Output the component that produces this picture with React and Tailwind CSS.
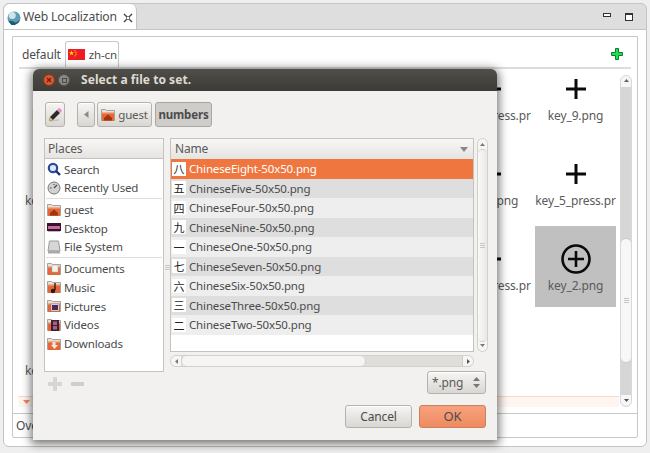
const font = { fontFamily: '"Noto Sans", sans-serif', letterSpacing: "-0.15px" };

const Plus = () => (
  <svg width="30" height="30" viewBox="0 0 30 30" className="block">
    <path d="M15 5v20M5 15h20" stroke="#0a0a0a" strokeWidth="3" fill="none" />
  </svg>
);

const CirclePlus = () => (
  <svg width="30" height="30" viewBox="0 0 30 30" className="block">
    <circle cx="15" cy="15" r="13.5" stroke="#0a0a0a" strokeWidth="2.6" fill="none" />
    <path d="M15 7v16M7 15h16" stroke="#0a0a0a" strokeWidth="2.6" fill="none" />
  </svg>
);

const Tile = ({ label, selected, icon }) => (
  <div className={`w-[81px] h-[81px] flex flex-col items-center pt-[18px] overflow-hidden ${selected ? "bg-[#c0c0c0]" : ""}`}>
    {icon || <Plus />}
    <div className="mt-[3px] w-[81px] text-center whitespace-nowrap overflow-hidden text-[12px] leading-[18px] text-[#5a5a5a]">{label}</div>
  </div>
);

// covered by the dialog, nothing of it can be seen
const Hidden = () => <div className="w-[81px] h-[81px]" />;

// first column, only the start of the label sticks out left of the dialog
const Stub = ({ label, indent }) => (
  <div className={`w-[81px] h-[81px] pt-[51px] text-[12px] leading-[18px] text-[#5a5a5a] whitespace-nowrap ${indent ? "pl-[7px]" : ""}`}>{label}</div>
);

const Globe = () => (
  <svg width="14" height="14" viewBox="0 0 16 16">
    <circle cx="8" cy="8" r="7.5" fill="#5f9db3" />
    <circle cx="6" cy="5" r="4" fill="#cfe3ea" />
    <path d="M2 12c2-2 5 0 7 1s3-1 5-3l-1 3-4 3H5z" fill="#1f5a73" />
  </svg>
);

const Flag = () => (
  <svg width="17" height="11" viewBox="0 0 17 11" className="shrink-0">
    <rect width="17" height="11" fill="#ee1c25" />
    <path d="M3.500 1.500l.7 1.800 1.800.1-1.400 1.100.5 1.800-1.600-1-1.600 1 .5-1.800L1 3.400l1.800-.1z" fill="#ffde00" />
    <circle cx="7" cy="1.800" r=".6" fill="#ffde00" />
    <circle cx="8" cy="3.400" r=".6" fill="#ffde00" />
    <circle cx="8" cy="5.200" r=".6" fill="#ffde00" />
    <circle cx="7" cy="6.800" r=".6" fill="#ffde00" />
  </svg>
);

// small orange ubuntu style folder, the glyph in the middle changes
const Folder = ({ children }) => (
  <svg width="14" height="14" viewBox="0 0 14 14" className="block shrink-0">
    <path d="M.5 1.500h4l1 1h8v10H.5z" fill="#e4e1dc" stroke="#a5a19b" />
    <rect x="1" y="4" width="12" height="9" fill="#e2683c" />
    <path d="M1 4h12v1.500H1z" fill="#f2ad8c" />
    {children}
  </svg>
);

const HomeFolder = () => (
  <Folder>
    <path d="M3 10l4-3.500L11 10v2.500H3z" fill="#a33310" />
  </Folder>
);

const PlaceIcon = ({ name }) => {
  if (name === "search") {
    return (
      <svg width="14" height="14" viewBox="0 0 14 14" className="block shrink-0">
        <circle cx="6" cy="6" r="4.200" fill="#dfe7f5" stroke="#2c4a9a" strokeWidth="2.200" />
        <path d="M9 9l4 4" stroke="#1d2f66" strokeWidth="2.400" />
      </svg>
    );
  }
  if (name === "recent") {
    return (
      <svg width="14" height="14" viewBox="0 0 14 14" className="block shrink-0">
        <circle cx="7" cy="7" r="6" fill="#d2d2d2" stroke="#777" />
        <path d="M7 7l3-3M3 7h1.500M7 3v1" stroke="#444" strokeWidth="1.200" />
      </svg>
    );
  }
  if (name === "desktop") {
    return (
      <svg width="14" height="14" viewBox="0 0 14 14" className="block shrink-0">
        <rect x="0" y="2" width="14" height="8" fill="#3a1230" />
        <rect x="1" y="5" width="12" height="3" fill="#c86a9a" />
        <rect x="1" y="10" width="12" height="1" fill="#bbb" />
      </svg>
    );
  }
  if (name === "fs") {
    return (
      <svg width="14" height="14" viewBox="0 0 14 14" className="block shrink-0">
        <path d="M2.500 1h9l1.500 10h-12z" fill="#d6d6d6" stroke="#9b9b9b" />
        <rect x="1" y="10.500" width="12" height="3" fill="#a9a9a9" />
      </svg>
    );
  }
  if (name === "guest") return <HomeFolder />;
  if (name === "docs") {
    return (
      <Folder>
        <rect x="5" y="3" width="6" height="7" fill="#f4f0ea" stroke="#aaa" strokeWidth=".5" />
      </Folder>
    );
  }
  if (name === "music") {
    return (
      <Folder>
        <path d="M8 3v7" stroke="#2a1a12" strokeWidth="1.400" />
        <circle cx="6" cy="11" r="2.200" fill="#2a1a12" />
      </Folder>
    );
  }
  if (name === "pictures") {
    return (
      <Folder>
        <rect x="4" y="5" width="8" height="7" fill="#eee" stroke="#777" strokeWidth=".5" />
        <rect x="5" y="6" width="6" height="5" fill="#4a2a5c" />
      </Folder>
    );
  }
  if (name === "videos") {
    return (
      <Folder>
        <rect x="4" y="2" width="8" height="11" fill="#3b2032" />
        <rect x="6" y="3.500" width="4" height="3.500" fill="#a8608c" />
        <rect x="6" y="8" width="4" height="3.500" fill="#a8608c" />
      </Folder>
    );
  }
  return (
    <Folder>
      <path d="M5.500 5h3v3H11l-3.500 4L4 8h1.500z" fill="#f2e6da" />
    </Folder>
  );
};

const Place = ({ icon, label }) => (
  <div className="h-[18.7px] flex items-center gap-[3px] pl-[1px] text-[11.5px] text-[#4c4c4c] whitespace-nowrap">
    <PlaceIcon name={icon} />
    <span>{label}</span>
  </div>
);

const files = [
  ["八", "ChineseEight-50x50.png"],
  ["五", "ChineseFive-50x50.png"],
  ["四", "ChineseFour-50x50.png"],
  ["九", "ChineseNine-50x50.png"],
  ["一", "ChineseOne-50x50.png"],
  ["七", "ChineseSeven-50x50.png"],
  ["六", "ChineseSix-50x50.png"],
  ["三", "ChineseThree-50x50.png"],
  ["二", "ChineseTwo-50x50.png"],
];

const FileRow = ({ glyph, name, index }) => {
  const bg = index === 0 ? "bg-[#f0763f] text-white" : index % 2 === 1 ? "bg-[#dedede] text-[#4c4c4c]" : "bg-[#eeeeee] text-[#4c4c4c]";
  return (
    <div className={`h-[19.5px] flex items-center pl-[1px] gap-[3px] text-[11.5px] whitespace-nowrap ${bg}`}>
      <span
        className="w-[14px] h-[14px] bg-white text-[#222] text-[11px] leading-[14px] text-center shrink-0"
        style={{ fontFamily: '"Noto Sans CJK SC", sans-serif' }}
      >
        {glyph}
      </span>
      <span>{name}</span>
    </div>
  );
};

const Grip = () => (
  <div className="flex flex-col gap-px">
    <div className="w-[5px] h-px bg-[#c8c6c2]" />
    <div className="w-[5px] h-px bg-[#c8c6c2]" />
    <div className="w-[5px] h-px bg-[#c8c6c2]" />
  </div>
);

const btn = "rounded-[3px] border border-[#b5b2ac] bg-gradient-to-b from-[#f6f5f3] to-[#d9d7d3] shadow-[inset_0_1px_0_#fff]";

const Dialog = () => (
  <div className="absolute left-[33px] top-[69px] w-[464px] h-[371px] rounded-t-[6px] bg-[#f2f1f0] shadow-[0_2px_10px_2px_rgba(0,0,0,0.55)] flex flex-col overflow-hidden">
    <div className="h-[22px] shrink-0 bg-gradient-to-b from-[#4f4e48] to-[#3c3b37] flex items-center pl-[10px]">
      <span className="w-[12px] h-[12px] rounded-full bg-[#e0562c] border border-[#7a3a20] flex items-center justify-center">
        <svg width="6" height="6" viewBox="0 0 6 6"><path d="M1 1l4 4M5 1L1 5" stroke="#5a2412" strokeWidth="1.200" /></svg>
      </span>
      <span className="ml-[3px] w-[12px] h-[12px] rounded-full bg-[#8b8982] border border-[#55544e] flex items-center justify-center">
        <span className="block w-[5px] h-[5px] border border-[#4a4943]" />
      </span>
      <span className="ml-[11px] text-[12px] font-bold tracking-[0.05px] text-[#dfdbd2] whitespace-nowrap">Select a file to set.</span>
    </div>

    <div className="flex items-stretch h-[25px] mt-[11px] ml-[12px] shrink-0">
      <div className={`w-[20px] flex items-center justify-center ${btn}`}>
        <svg width="16" height="16" viewBox="0 0 16 16">
          <path d="M3 14l9-1" stroke="#c4c2be" strokeWidth="1.400" />
          <path d="M2 14l1-4 7-7 3 3-7 7z" fill="#2b2b2b" />
          <path d="M2 14l1-4 3 3z" fill="#d9c56a" />
          <path d="M10 3l1.500-1.500a1 1 0 0 1 1.500 0L14.500 3a1 1 0 0 1 0 1.500L13 6z" fill="#e48fc4" />
        </svg>
      </div>
      <div className={`w-[18px] ml-[12px] flex items-center justify-center ${btn}`}>
        <svg width="5" height="7" viewBox="0 0 5 7"><path d="M4.500 0v7L0 3.500z" fill="#8a8a8a" /></svg>
      </div>
      <div className={`w-[55px] ml-[2px] flex items-center justify-center gap-[3px] text-[11.5px] text-[#5a5a5a] ${btn}`}>
        <HomeFolder />
        <span>guest</span>
      </div>
      <div className="w-[57px] ml-[3px] flex items-center justify-center rounded-[3px] border border-[#a9a7a2] bg-[#cfcdc9] text-[11.5px] font-bold text-[#4c4c4c]">numbers</div>
    </div>

    <div className="flex mt-[11px] ml-[11px] h-[234px] shrink-0">
      <div className="w-[120px] flex flex-col">
        <div className="h-[21px] flex items-center pl-[3px] border border-[#c5c3bf] bg-gradient-to-b from-[#f8f7f6] to-[#e6e4e1] text-[12px] text-[#5a5a5a]">Places</div>
        <div className="flex-1 bg-white border-x border-b border-[#c5c3bf] px-px pt-[1px]">
          <Place icon="search" label="Search" />
          <Place icon="recent" label="Recently Used" />
          <div className="h-px bg-[#dddddd] my-[1px]" />
          <Place icon="guest" label="guest" />
          <Place icon="desktop" label="Desktop" />
          <Place icon="fs" label="File System" />
          <div className="h-px bg-[#dddddd] my-[1px]" />
          <Place icon="docs" label="Documents" />
          <Place icon="music" label="Music" />
          <Place icon="pictures" label="Pictures" />
          <Place icon="videos" label="Videos" />
          <Place icon="downloads" label="Downloads" />
        </div>
      </div>

      <div className="w-[6px] flex justify-center pt-[127px]">
        <Grip />
      </div>

      <div className="w-[318px] flex flex-col">
        <div className="flex h-[214px]">
          <div className="w-[304px] flex flex-col border border-[#c5c3bf] bg-white">
            <div className="h-[20px] shrink-0 flex items-center justify-between pl-[4px] pr-[5px] bg-gradient-to-b from-[#f8f7f6] to-[#e6e4e1] text-[12px] text-[#5a5a5a]">
              <span>Name</span>
              <svg width="8" height="5" viewBox="0 0 8 5"><path d="M0 0h8L4 5z" fill="#888" /></svg>
            </div>
            {files.map(([g, n], i) => (
              <FileRow key={n} glyph={g} name={n} index={i} />
            ))}
          </div>
          <div className="w-[11px] ml-[3px] rounded-full border border-[#d2d0cc] bg-[#f6f5f4] flex flex-col items-center">
            <svg width="5" height="3" viewBox="0 0 5 3" className="mt-[4px]"><path d="M0 3h5L2.500 0z" fill="#777" /></svg>
            <div className="mt-[3px] w-full h-[193px] rounded-full border-y border-[#cfcdc9] bg-gradient-to-r from-[#f9f9f8] to-[#e9e8e6] flex items-center justify-center">
              <Grip />
            </div>
            <svg width="5" height="3" viewBox="0 0 5 3" className="mt-[2px]"><path d="M0 0h5L2.500 3z" fill="#777" /></svg>
          </div>
        </div>
        <div className="w-[304px] h-[12px] mt-[3px] rounded-full border border-[#d2d0cc] bg-[#dfdedb] flex items-center overflow-hidden">
          <div className="w-[10px] h-full bg-[#f6f5f4] flex items-center justify-center">
            <svg width="3" height="5" viewBox="0 0 3 5"><path d="M3 0v5L0 2.500z" fill="#777" /></svg>
          </div>
          <div className="w-[185px] h-full rounded-full bg-[#f6f5f4] border-x border-[#cfcdc9]" />
          <div className="flex-1" />
          <div className="w-[11px] h-full bg-[#f6f5f4] border-l border-[#cfcdc9] flex items-center justify-center">
            <svg width="3" height="5" viewBox="0 0 3 5"><path d="M0 0v5l3-2.500z" fill="#555" /></svg>
          </div>
        </div>
      </div>
    </div>

    <div className="flex items-start justify-between ml-[15px] mr-[11px] -mt-[1px] shrink-0">
      <div className="flex items-center gap-[9px] mt-[6px]">
        <svg width="14" height="14" viewBox="0 0 14 14"><path d="M5 0h4v5h5v4H9v5H5V9H0V5h5z" fill="#d8d6d3" /></svg>
        <div className="w-[13px] h-[4px] bg-[#d0cecb]" />
      </div>
      <div className={`w-[59px] h-[23px] flex items-center justify-between pl-[4px] pr-[5px] text-[12px] text-[#5a5a5a] ${btn}`}>
        <span>*.png</span>
        <svg width="7" height="11" viewBox="0 0 7 11"><path d="M0 4h7L3.500 0zM0 7h7l-3.500 4z" fill="#777" /></svg>
      </div>
    </div>

    <div className="flex justify-end gap-[7px] mr-[11px] mt-[11px] shrink-0">
      <div className={`w-[67px] h-[23px] flex items-center justify-center text-[12px] text-[#4c4c4c] ${btn}`}>Cancel</div>
      <div className="w-[67px] h-[23px] flex items-center justify-center rounded-[3px] border border-[#c9805c] bg-gradient-to-b from-[#f7a27e] to-[#ee8a5f] text-[13px] text-[#4c4c4c]">OK</div>
    </div>
  </div>
);

export default function App() {
  return (
    <div className="relative w-[650px] h-[453px] overflow-hidden bg-[#efefef]" style={font}>
      <div className="ml-[3px] mt-[3px] w-[644px] h-[444px] flex flex-col rounded-[6px] border border-[#c4c4c4] bg-[#dedede] overflow-hidden">
        <div className="h-[25px] shrink-0 flex items-stretch">
          <div className="w-[133px] rounded-t-[6px] bg-white border-r border-[#c4c4c4] flex items-center pl-[3px] pt-[2px] gap-[2px] text-[12.2px] text-[#4c4c4c] whitespace-nowrap">
            <Globe />
            <span>Web Localization</span>
            <svg width="10" height="10" viewBox="0 0 10 10" className="ml-[4px]">
              <path d="M1 1l8 8M9 1L1 9" stroke="#444" strokeWidth="1.400" />
              <rect x="3.500" y="3.500" width="3" height="3" fill="#fff" stroke="#444" strokeWidth=".6" />
            </svg>
          </div>
          <div className="flex-1 flex items-center justify-end pr-[13px] gap-[14px]">
            <div className="w-[8px] h-[4px] border border-[#333] bg-white -mt-[4px]" />
            <div className="w-[8px] h-[8px] border border-[#333] border-t-[2px] bg-white" />
          </div>
        </div>

        <div className="flex-1 bg-white pl-[8px] pr-[8px] pt-[6px] pb-[8px] border-t border-[#c4c4c4]">
          <div className="h-full flex flex-col border border-[#c8c8c8] rounded-b-[2px]">
            <div className="mx-[6px] h-[32px] shrink-0 flex items-end border-b-2 border-[#dddddd] text-[12px] text-[#4c4c4c]">
              <span className="mb-[3px] ml-[3px]">default</span>
              <div className="ml-[4px] w-[54px] h-[26px] rounded-t-[3px] border-x border-t border-[#c8c8c8] flex items-center pl-[2px] gap-[4px] whitespace-nowrap text-[11.5px]">
                <Flag />
                <span>zh-cn</span>
              </div>
              <svg width="12" height="12" viewBox="0 0 12 12" className="ml-auto mr-[8px] mb-[7px]">
                <path d="M4.500.5h3v4h4v3h-4v4h-3v-4h-4v-3h4z" fill="#22e04e" stroke="#0e7a2c" />
              </svg>
            </div>

            <div className="flex-1 min-h-0 flex pl-[5px] pr-[5px]">
              <div className="flex-1 min-w-0 flex flex-col">
                <div className="flex-1 min-h-0 overflow-hidden pl-[7px]">
                  <div className="-mt-[13px] grid grid-cols-[repeat(7,81px)] gap-[4px]">
                    <Stub label="k" indent />
                    <Hidden />
                    <Hidden />
                    <Hidden />
                    <Hidden />
                    <Tile label="key_6_press.pr" />
                    <Tile label="key_9.png" />

                    <Stub label="ke" />
                    <Hidden />
                    <Hidden />
                    <Hidden />
                    <Hidden />
                    <Tile label="key_4.png" />
                    <Tile label="key_5_press.pr" />

                    <Hidden />
                    <Hidden />
                    <Hidden />
                    <Hidden />
                    <Hidden />
                    <Tile label="key_9_press.pr" />
                    <Tile label="key_2.png" selected icon={<CirclePlus />} />

                    <Stub label="ke" />
                  </div>
                </div>
                <div className="h-[11px] shrink-0 border-t border-[#fbd8c4] bg-[#fff6f1] flex items-center pl-[5px]">
                  <svg width="7" height="4" viewBox="0 0 7 4"><path d="M0 0h7L3.500 4z" fill="#ee8a5f" /></svg>
                </div>
              </div>
              <div className="w-[12px] ml-[1px] mt-[6px] rounded-full border border-[#d8d8d8] bg-[#d6d6d6] flex flex-col items-center overflow-hidden">
                <div className="w-full h-[11px] bg-[#f6f6f6] flex justify-center pt-[3px] shrink-0">
                  <svg width="5" height="3" viewBox="0 0 5 3"><path d="M0 3h5L2.500 0z" fill="#666" /></svg>
                </div>
                <div className="mt-[151px] w-full h-[125px] rounded-full bg-[#f7f7f7] border-y border-[#c8c8c8] shrink-0 flex items-center justify-center">
                  <Grip />
                </div>
                <div className="mt-auto w-full h-[11px] bg-[#f6f6f6] flex justify-center pt-[4px] shrink-0">
                  <svg width="5" height="3" viewBox="0 0 5 3"><path d="M0 0h5L2.500 3z" fill="#555" /></svg>
                </div>
              </div>
            </div>

            <div className="mt-[6px] h-[24px] shrink-0 border-t border-[#c8c8c8] flex items-center pl-[3px] text-[12px] text-[#4c4c4c]">Overview</div>
          </div>
        </div>
      </div>

      <Dialog />
    </div>
  );
}
